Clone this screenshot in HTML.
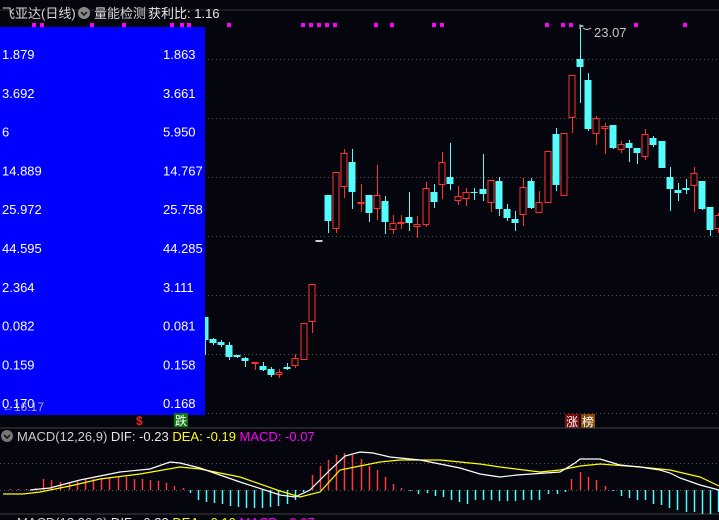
<!DOCTYPE html>
<html><head><meta charset="utf-8"><style>
body{margin:0;background:#05050d;width:719px;height:520px;overflow:hidden;font-family:"Liberation Sans","Noto Sans CJK SC",sans-serif;}
svg{position:absolute;left:0;top:0}
</style></head><body>
<svg id="s" width="719" height="520" xmlns="http://www.w3.org/2000/svg" font-family="Liberation Sans, Noto Sans CJK SC, sans-serif">
<line x1="0" y1="10" x2="719" y2="10" stroke="#333" />
<text x="2" y="18" fill="#d8d8d8" font-size="13">飞亚达(日线)</text>
<circle cx="84" cy="13" r="6" fill="#888"/><path d="M81 12l3 3 3-3" stroke="#111" stroke-width="1.5" fill="none"/>
<text x="94" y="18" fill="#d8d8d8" font-size="13">量能检测</text>
<text x="148" y="18" fill="#e8e8e8" font-size="13">获利比: 1.16</text>
<g id="grid" stroke="#555" stroke-dasharray="1,3"></g>
<g id="dots" fill="#ff00ff"></g>
<g id="candles"></g>
<rect x="0" y="27" width="205" height="388" fill="#0000ff"/>
<g id="lbl" fill="#fff" font-size="13"></g>
<text x="2" y="411" fill="#b0b0c0" font-size="12">←16.17</text>
<path d="M580 29 l0 -4 l3 1 l-3 1 M583 28 q4 3 8 0" stroke="#ccc" fill="none"/>
<text x="594" y="37" fill="#c8c8c8" font-size="13">23.07</text>
<text x="136" y="425" fill="#ff2020" font-size="12" font-weight="bold">$</text>
<rect x="174" y="413" width="14" height="14" fill="#0a7a10"/><text x="175" y="425" fill="#fff" font-size="12">跌</text>
<rect x="565" y="414" width="14" height="14" fill="#7a0a0a"/><text x="566" y="426" fill="#fff" font-size="12">涨</text>
<rect x="581" y="414" width="14" height="14" fill="#8a4a05"/><text x="582" y="426" fill="#fff" font-size="12">榜</text>
<line x1="0" y1="428" x2="719" y2="428" stroke="#444"/>
<line x1="0" y1="514" x2="719" y2="514" stroke="#444"/>
<circle cx="7" cy="436" r="6" fill="#777"/><path d="M4 435l3 3 3-3" stroke="#111" stroke-width="1.5" fill="none"/>
<text x="17" y="441" font-size="13"><tspan fill="#ccc">MACD(12,26,9)</tspan><tspan fill="#e8e8e8"> DIF: -0.23 </tspan><tspan fill="#ffff00">DEA: -0.19 </tspan><tspan fill="#ff00ff">MACD: -0.07</tspan></text>
<text x="17" y="527" font-size="13"><tspan fill="#ccc">MACD(12,26,9)</tspan><tspan fill="#e8e8e8"> DIF: -0.23 </tspan><tspan fill="#ffff00">DEA: -0.19 </tspan><tspan fill="#ff00ff">MACD: -0.07</tspan></text>
<g id="hist"></g>
<polyline fill="none" stroke="#ffff00" stroke-width="1.2" points="3,494 23,494 40,492 70,486 100,479 140,474 180,467 200,469 240,477 280,491 300,497 320,492 340,470 360,466 380,462 400,460 440,460 480,464 500,467 540,472 560,470 580,466 600,464 640,467 670,470 700,477 719,486"/>
<polyline fill="none" stroke="#ffffff" stroke-width="1.2" points="30,490 50,488 80,480 120,472 150,469 170,462 180,463 200,468 240,482 280,495 295,497 310,490 330,470 345,456 360,452 373,453 390,457 420,460 445,465 460,468 480,474 500,477 517,475 560,472 575,463 580,459 600,459 610,462 620,465 640,467 660,470 670,473 680,478 700,485 719,490"/>
</svg>
<script>
var NS="http://www.w3.org/2000/svg";
function el(p,t,a){var e=document.createElementNS(NS,t);for(var k in a)e.setAttribute(k,a[k]);document.getElementById(p).appendChild(e);}
[59,118,177,236,295,354,413,463].forEach(function(y){el("grid","line",{x1:0,y1:y+.5,x2:719,y2:y+.5});});
el("grid","line",{x1:0,y1:490.5,x2:719,y2:490.5});
[34,42,92,124,172,182,189,229,303,311,319,327,335,376,392,434,442,547,563,571,636,685].forEach(function(x){el("dots","rect",{x:x-2,y:23,width:4,height:4});});
var L=[["1.879","1.863"],["3.692","3.661"],["6","5.950"],["14.889","14.767"],["25.972","25.758"],["44.595","44.285"],["2.364","3.111"],["0.082","0.081"],["0.159","0.158"],["0.170","0.168"]];
L.forEach(function(r,i){var y=59+i*38.8;el("lbl","text",{x:2,y:y});el("lbl","text",{x:163,y:y});var t=document.getElementById("lbl").children;t[t.length-2].textContent=r[0];t[t.length-1].textContent=r[1];});
var C=[[205,317,340,317,355,0],[213,339,343,338,345,0],[221,342,345,340,347,0],[229,345,357,342,360,0],[237,355,357,355,358,0],[245,358,361,357,367,0],[255,362,364,362,370,1],[263,366,370,362,371,0],[271,369,375,367,377,0],[279,372,375,369,378,1],[287,367,369,363,370,0],[295,358,366,354,368,1],[304,323,360,323,360,1],[312,284,322,284,333,1],[319,240,242,240,242,2],
[328,195,221,195,233,0],[336,172,229,172,233,1],[344,153,187,149,198,1],[352,162,192,149,209,0],[361,202,204,184,212,1],[369,195,213,195,222,0],[377,195,209,165,220,1],[385,201,222,196,234,0],[393,223,230,215,234,1],[401,222,224,215,229,1],[409,217,223,192,231,0],[417,224,227,216,238,1],[426,188,225,182,227,1],[434,192,202,184,208,0],[442,162,185,152,199,1],[450,177,184,143,190,0],[458,196,201,186,205,1],[466,192,199,188,206,1],[474,192,193,188,200,0],[483,189,194,154,201,0],[491,180,203,180,212,1],[499,181,209,177,216,0],[507,209,218,204,221,0],[515,219,223,211,231,0],[523,187,215,178,226,1],[531,181,208,178,209,0],[539,202,213,191,213,1],[548,151,203,151,203,1],[556,134,185,128,191,0],[564,133,196,133,196,1],[572,75,118,75,133,1],[580,59,67,28,103,0],[588,80,129,73,131,0],[596,118,134,116,145,1],[605,126,129,123,154,1],[613,125,148,125,149,0],[621,144,150,141,153,1],[629,143,148,140,162,0],[637,148,153,148,164,0],[645,134,157,129,160,1],[653,138,145,136,147,0],[662,141,168,141,168,0],[670,177,189,167,211,0],[678,190,193,183,201,0],[686,188,190,179,194,0],[694,173,186,167,212,1],[702,181,209,181,210,0],[710,207,230,207,236,0],[718,215,229,213,233,1]];
C.forEach(function(c){var x=c[0],col=c[5]==1?"#ff3030":(c[5]==2?"#ccc":"#54fcfc");
el("candles","line",{x1:x+.5,y1:c[3],x2:x+.5,y2:c[4],stroke:col});
var h=Math.max(1,c[2]-c[1]);
if(c[5]==1&&h>2)el("candles","rect",{x:x-3,y:c[1]+.5,width:6,height:h-1,fill:"#05050d",stroke:col});
else el("candles","rect",{x:x-3.5,y:c[1],width:7,height:h,fill:col});});
var H=[[10,489],[18,489],[26,489],[35,488],[43,479],[51,480],[60,482],[69,482],[77,480],[85,479],[93,479],[101,478],[109,477],[118,477],[126,477],[134,479],[142,479],[150,480],[158,481],[166,483],[174,486],[183,488],[190,493],[198,500],[206,502],[214,503],[222,504],[230,506],[238,507],[246,508],[254,508],[262,508],[270,507],[278,506],[287,504],[295,500],[303,492],[312,475],[320,466],[328,460],[336,455],[344,453],[352,455],[361,459],[369,466],[377,470],[385,477],[393,484],[401,488],[410,491],[418,494],[427,493],[435,496],[443,497],[451,500],[459,502],[467,504],[475,500],[483,500],[491,500],[499,501],[507,501],[515,501],[523,500],[531,500],[539,500],[548,494],[557,494],[565,492],[571,479],[580,472],[588,477],[596,480],[605,486],[613,491],[621,496],[629,498],[637,500],[645,500],[653,504],[661,505],[669,508],[677,510],[686,512],[694,512],[702,514],[710,514],[718,512]];
H.forEach(function(h){var up=h[1]<490;el("hist","line",{x1:h[0]+.5,y1:h[1],x2:h[0]+.5,y2:490,stroke:up?"#ff3838":"#54fcfc","stroke-width":1.5});});
</script>
</body></html>
